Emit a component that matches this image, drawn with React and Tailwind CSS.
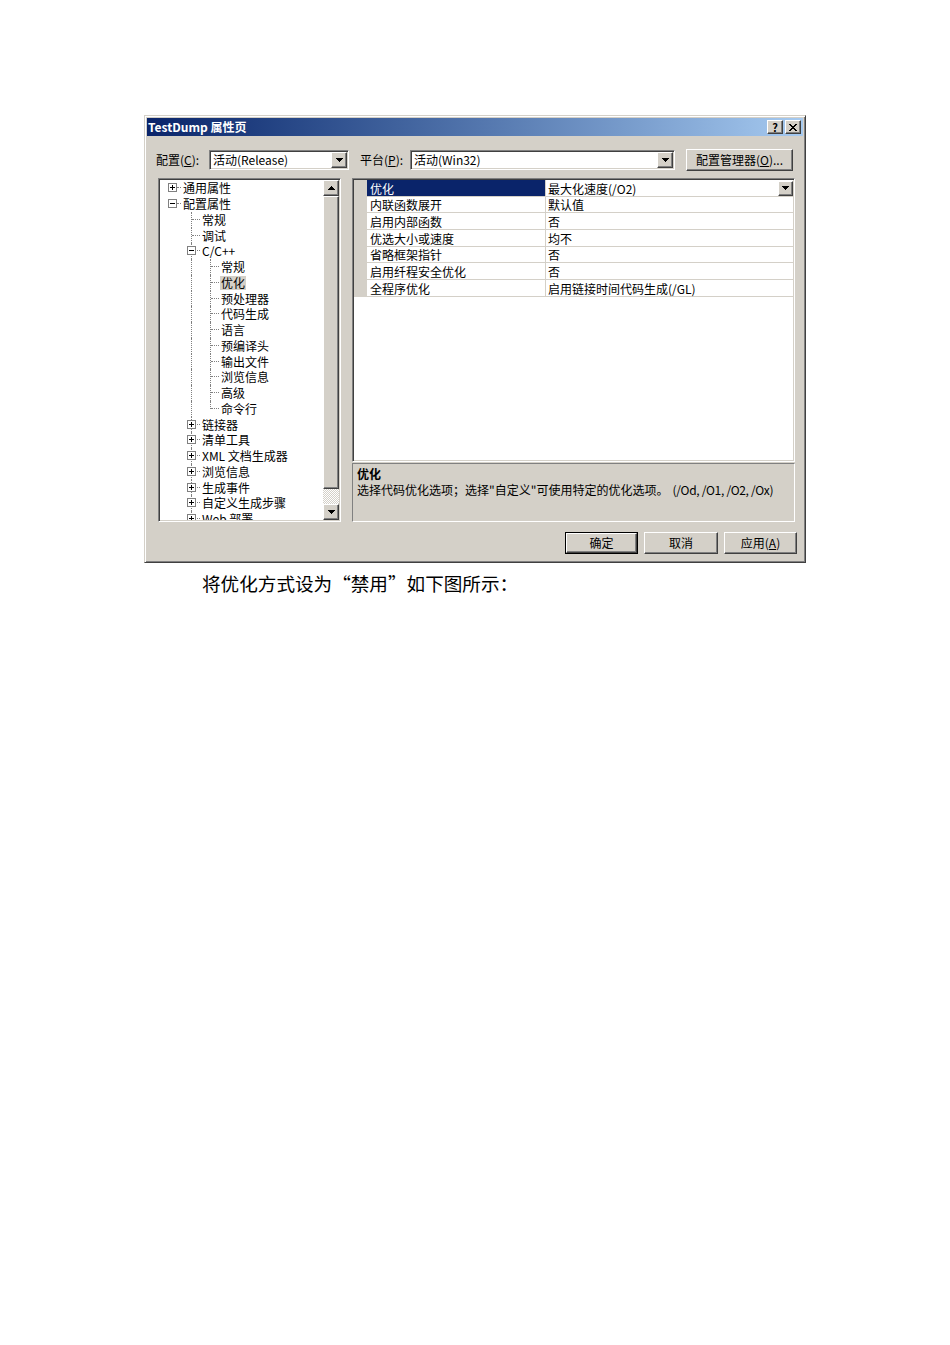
import React from 'react';

const raised =
  "bg-[#d4d0c8] border border-t-white border-l-white border-r-[#404040] border-b-[#404040] shadow-[inset_-1px_-1px_0_#808080]";
const sunken =
  "border border-t-[#808080] border-l-[#808080] border-r-white border-b-white shadow-[inset_1px_1px_0_#404040,inset_-1px_-1px_0_#d4d0c8]";

function DownArrow() {
  return (
    <svg width="7" height="4" viewBox="0 0 7 4" shapeRendering="crispEdges">
      <path d="M0 0h7v1H0z M1 1h5v1H1z M2 2h3v1H2z M3 3h1v1H3z" fill="#000" />
    </svg>
  );
}
function UpArrow() {
  return (
    <svg width="7" height="4" viewBox="0 0 7 4" shapeRendering="crispEdges">
      <path d="M3 0h1v1H3z M2 1h3v1H2z M1 2h5v1H1z M0 3h7v1H0z" fill="#000" />
    </svg>
  );
}

function Combo({ w, text }) {
  return (
    <div className={`${w} h-[20px] bg-white ${sunken} p-[1px] flex`}>
      <div className="flex-1 pl-[2px] leading-[16px] text-[12px] text-black whitespace-nowrap overflow-hidden">
        {text}
      </div>
      <div className={`w-[16px] h-[16px] ${raised} flex items-center justify-center`}>
        <DownArrow />
      </div>
    </div>
  );
}

const tree = [
  { t: '通用属性', l: 0, e: '+' },
  { t: '配置属性', l: 0, e: '-' },
  { t: '常规', l: 1 },
  { t: '调试', l: 1 },
  { t: 'C/C++', l: 1, e: '-' },
  { t: '常规', l: 2 },
  { t: '优化', l: 2, sel: true },
  { t: '预处理器', l: 2 },
  { t: '代码生成', l: 2 },
  { t: '语言', l: 2 },
  { t: '预编译头', l: 2 },
  { t: '输出文件', l: 2 },
  { t: '浏览信息', l: 2 },
  { t: '高级', l: 2 },
  { t: '命令行', l: 2, last: true },
  { t: '链接器', l: 1, e: '+' },
  { t: '清单工具', l: 1, e: '+' },
  { t: 'XML 文档生成器', l: 1, e: '+' },
  { t: '浏览信息', l: 1, e: '+' },
  { t: '生成事件', l: 1, e: '+' },
  { t: '自定义生成步骤', l: 1, e: '+' },
  { t: 'Web 部署', l: 1, e: '+' },
];

const vline = 'absolute w-0 border-l border-dotted border-[#808080]';
const hline = 'absolute h-0 border-t border-dotted border-[#808080]';

function ExpBox({ sign, leftCls }) {
  return (
    <div className={`absolute ${leftCls} top-[3px] w-[9px] h-[9px] bg-white border border-[#808080] flex items-center justify-center`}>
      <svg width="5" height="5" viewBox="0 0 5 5" shapeRendering="crispEdges">
        <path d="M0 2h5v1H0z" fill="#000" />
        {sign === '+' && <path d="M2 0h1v5H2z" fill="#000" />}
      </svg>
    </div>
  );
}

function TreeRow({ n, i }) {
  const h = i % 4 === 3 ? 'h-[15px]' : 'h-[16px]';
  const pl = n.l === 0 ? 'pl-[22px]' : n.l === 1 ? 'pl-[41px]' : 'pl-[60px]';
  return (
    <div className={`relative ${h} ${pl} flex items-center`}>
      {n.l === 2 && <div className={`${vline} left-[31px] top-0 bottom-0`} />}
      {n.l === 1 && <div className={`${vline} left-[31px] top-0 bottom-0`} />}
      {n.l === 2 && (
        <div className={`${vline} left-[50px] top-0 ${n.last ? 'h-[8px]' : 'bottom-0'}`} />
      )}
      {n.l === 0 && <div className={`${hline} left-[17px] w-[4px] top-[7px]`} />}
      {n.l === 1 && <div className={`${hline} left-[32px] w-[8px] top-[7px]`} />}
      {n.l === 2 && <div className={`${hline} left-[51px] w-[8px] top-[7px]`} />}
      {n.e && <ExpBox sign={n.e} leftCls={n.l === 0 ? 'left-[8px]' : 'left-[27px]'} />}
      <span
        className={`relative text-[12px] leading-[14px] whitespace-nowrap px-[1px] ${
          n.sel ? 'bg-[#d4d0c8]' : ''
        } text-black`}
      >
        {n.t}
      </span>
    </div>
  );
}

const props = [
  ['优化', '最大化速度(/O2)', 'h-[17px]'],
  ['内联函数展开', '默认值', 'h-[16px]'],
  ['启用内部函数', '否', 'h-[17px]'],
  ['优选大小或速度', '均不', 'h-[17px]'],
  ['省略框架指针', '否', 'h-[16px]'],
  ['启用纤程安全优化', '否', 'h-[17px]'],
  ['全程序优化', '启用链接时间代码生成(/GL)', 'h-[17px]'],
];

function Button({ children, def }) {
  const inner = (
    <div className={`w-full h-full ${raised} flex items-center justify-center text-[12px] text-black`}>
      {children}
    </div>
  );
  if (def) {
    return <div className="w-[73px] h-[22px] border border-black">{inner}</div>;
  }
  return <div className="w-[74px] h-[22px]">{inner}</div>;
}

export default function App() {
  return (
    <div className="w-[950px] min-h-[1345px] bg-white pt-[115px] pl-[144px] font-['Noto_Sans_CJK_SC',sans-serif]">
      {/* Dialog */}
      <div className="w-[662px] h-[448px] bg-[#d4d0c8] border border-[#d4d0c8] border-r-[#404040] border-b-[#404040] shadow-[inset_1px_1px_0_#ffffff,inset_-1px_-1px_0_#808080] p-[2px] flex flex-col">
        {/* Title bar */}
        <div className="h-[18px] bg-linear-to-r from-[#0a246a] to-[#a6caf0] flex items-center pl-[1px] pr-[2px]">
          <span className="text-white font-bold text-[12px] leading-[16px] flex-1">TestDump 属性页</span>
          <div className={`w-[16px] h-[14px] ${raised} flex items-center justify-center text-[11px] font-bold leading-none text-black`}>
            ?
          </div>
          <div className={`ml-[2px] w-[16px] h-[14px] ${raised} flex items-center justify-center`}>
            <svg width="8" height="7" viewBox="0 0 8 7" shapeRendering="crispEdges">
              <path
                d="M0 0h2v1H0z M6 0h2v1H6z M1 1h2v1H1z M5 1h2v1H5z M2 2h4v1H2z M3 3h2v1H3z M2 4h4v1H2z M1 5h2v1H1z M5 5h2v1H5z M0 6h2v1H0z M6 6h2v1H6z"
                fill="#000"
              />
            </svg>
          </div>
        </div>

        {/* Config row */}
        <div className="mt-[13px] h-[22px] flex items-center pl-[9px] text-[12px] text-black">
          <span className="w-[53px] whitespace-nowrap">
            配置(<span className="underline">C</span>):
          </span>
          <Combo w="w-[140px]" text="活动(Release)" />
          <span className="ml-[11px] w-[50px] whitespace-nowrap">
            平台(<span className="underline">P</span>):
          </span>
          <Combo w="w-[265px]" text="活动(Win32)" />
          <div className="ml-[11px] w-[107px] h-[22px]">
            <div className={`w-full h-full ${raised} flex items-center justify-center text-[12px] whitespace-nowrap`}>
              配置管理器(<span className="underline">O</span>)...
            </div>
          </div>
        </div>

        {/* Panels */}
        <div className="mt-[7px] pl-[11px] flex">
          {/* Tree */}
          <div className={`w-[183px] h-[344px] ${sunken} p-[1px] flex`}>
            <div className="flex-1 bg-white overflow-hidden">
              {tree.map((n, i) => (
                <TreeRow key={i} n={n} i={i} />
              ))}
            </div>
            <div className="w-[16px] flex flex-col bg-[#d4d0c8]">
              <div className={`h-[16px] ${raised} flex items-center justify-center`}>
                <UpArrow />
              </div>
              <div className={`h-[293px] ${raised}`} />
              <div className="flex-1 bg-[repeating-conic-gradient(#d4d0c8_0%_25%,#ffffff_0%_50%)] bg-[length:2px_2px]" />
              <div className={`h-[16px] ${raised} flex items-center justify-center`}>
                <DownArrow />
              </div>
            </div>
          </div>

          {/* Right panel */}
          <div className="ml-[11px] w-[443px] h-[344px] flex flex-col">
            <div className={`h-[284px] ${sunken} p-[1px]`}>
              <div className="h-full bg-white flex flex-col">
                {props.map(([k, v, h], i) => (
                  <div key={i} className={`${h} flex border-b border-[#d4d0c8] text-[12px] leading-[15px]`}>
                    <div className="w-[13px] bg-[#d4d0c8]" />
                    <div
                      className={`w-[179px] pl-[3px] border-r border-[#d4d0c8] whitespace-nowrap flex items-center ${
                        i === 0 ? 'bg-[#0a246a] text-white' : 'text-black'
                      }`}
                    >
                      {k}
                    </div>
                    <div className="flex-1 pl-[2px] flex items-center text-black whitespace-nowrap">
                      <span className="flex-1">{v}</span>
                      {i === 0 && (
                        <div className={`w-[15px] h-[15px] ${raised} flex items-center justify-center`}>
                          <DownArrow />
                        </div>
                      )}
                    </div>
                  </div>
                ))}
              </div>
            </div>
            <div className="mt-[1px] h-[59px] border border-[#808080] border-r-white border-b-white pl-[4px] pt-[2px] text-[12px] leading-[16px] text-black">
              <div className="font-bold">优化</div>
              <div className="whitespace-nowrap">
                选择代码优化选项；选择"自定义"可使用特定的优化选项。
                <span className="ml-[4px] tracking-[-0.3px]">(/Od, /O1, /O2, /Ox)</span>
              </div>
            </div>
          </div>
        </div>

        {/* Buttons */}
        <div className="mt-[10px] flex justify-end gap-[6px] pr-[6px]">
          <Button def>确定</Button>
          <Button>取消</Button>
          <div className="w-[73px] h-[22px]">
            <div className={`w-full h-full ${raised} flex items-center justify-center text-[12px] text-black`}>
              应用(<span className="underline">A</span>)
            </div>
          </div>
        </div>
      </div>

      {/* Caption */}
      <div className="mt-[10px] ml-[58px] text-[18.6px] leading-[20px] text-black whitespace-nowrap">
        将优化方式设为“禁用”如下图所示：
      </div>
    </div>
  );
}
